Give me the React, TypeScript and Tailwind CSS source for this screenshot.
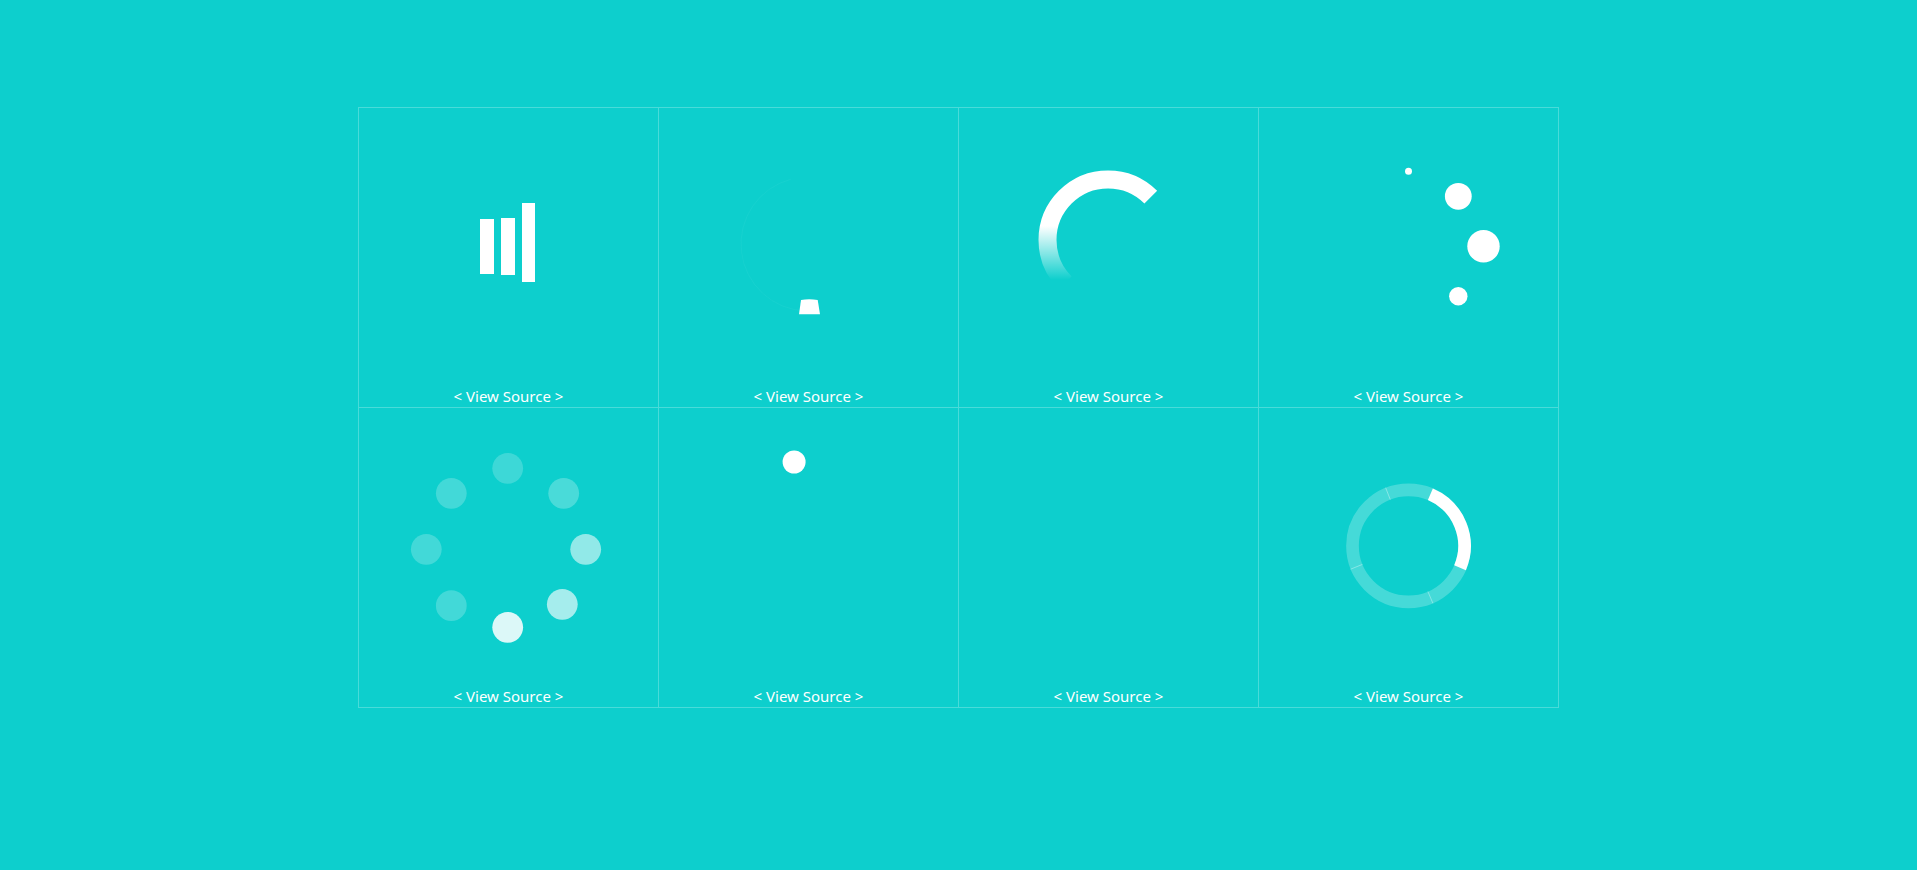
import React from "react"

// helpers for polar points around a center
const pt = (cx: number, cy: number, r: number, deg: number) => {
  const a = (deg * Math.PI) / 180
  return [cx + r * Math.cos(a), cy + r * Math.sin(a)]
}

const arc = (cx: number, cy: number, r: number, from: number, to: number, sweep: 0 | 1) => {
  const [x1, y1] = pt(cx, cy, r, from)
  const [x2, y2] = pt(cx, cy, r, to)
  return `M${x1} ${y1} A${r} ${r} 0 0 ${sweep} ${x2} ${y2}`
}

function Bars() {
  return (
    <g fill="#fff">
      <rect x="122" y="112" width="14" height="55" />
      <rect x="143" y="111" width="14" height="57" />
      <rect x="164" y="96" width="13" height="79" />
    </g>
  )
}

function Drop() {
  return (
    <g>
      <path d={arc(150, 137, 67, 92, 255, 1)} fill="none" stroke="#fff" strokeOpacity="0.04" strokeWidth="1" />
      <path d="M143 193 Q151 191.5 159.7 193 L162 207.3 L141 207.3 Z" fill="#fff" />
    </g>
  )
}

function Spinner() {
  return (
    <g>
      <defs>
        <linearGradient id="fade" gradientUnits="userSpaceOnUse" x1="0" y1="119" x2="0" y2="173">
          <stop offset="0" stopColor="#fff" stopOpacity="1" />
          <stop offset="1" stopColor="#fff" stopOpacity="0" />
        </linearGradient>
      </defs>
      <path d={arc(150, 133, 60.5, -45, -225, 0)} fill="none" stroke="url(#fade)" strokeWidth="18" />
    </g>
  )
}

function Orbit() {
  return (
    <g fill="#fff">
      <circle cx="150.5" cy="64.3" r="3.5" />
      <circle cx="200.3" cy="89.3" r="13.4" />
      <circle cx="225.5" cy="139.3" r="16.2" />
      <circle cx="200.3" cy="189.3" r="9.2" />
    </g>
  )
}

const ringDots = [
  { x: 149.7, y: 61.3, o: 0.2 },
  { x: 205.7, y: 86.3, o: 0.25 },
  { x: 227.7, y: 142.3, o: 0.55 },
  { x: 204.3, y: 197.3, o: 0.63 },
  { x: 149.7, y: 220.3, o: 0.86 },
  { x: 93.3, y: 198.7, o: 0.22 },
  { x: 68.3, y: 142.3, o: 0.22 },
  { x: 93.3, y: 86.3, o: 0.22 },
]

function DotCircle() {
  return (
    <g>
      {ringDots.map((d, i) => (
        <circle key={i} cx={d.x} cy={d.y} r="15.4" fill="#fff" fillOpacity={d.o} />
      ))}
    </g>
  )
}

function Bounce() {
  return <circle cx="136.1" cy="55" r="11.5" fill="#fff" />
}

function Ring() {
  const cx = 150.5
  const cy = 138.8
  return (
    <g>
      <circle cx={cx} cy={cy} r="56" fill="none" stroke="#fff" strokeOpacity="0.23" strokeWidth="12.7" />
      <path d={arc(cx, cy, 56, -67, 23, 1)} fill="none" stroke="#fff" strokeWidth="12.7" />
      {[-111.5, 158, 67].map((a) => {
        const [x1, y1] = pt(cx, cy, 49.6, a)
        const [x2, y2] = pt(cx, cy, 62.4, a)
        return <line key={a} x1={x1} y1={y1} x2={x2} y2={y2} stroke="#fff" strokeOpacity="0.35" strokeWidth="1" />
      })}
    </g>
  )
}

const loaders = [Bars, Drop, Spinner, Orbit, DotCircle, Bounce, null, Ring]

export default function App() {
  return (
    <div className="min-h-screen w-full bg-[#0dcfcd] pt-[107px] font-['Noto_Sans',sans-serif]">
      <div className="mx-auto grid w-[1201px] grid-cols-4 border-l border-t border-white/25">
        {loaders.map((Loader, i) => (
          <div key={i} className="flex h-[300px] flex-col border-b border-r border-white/25">
            <svg width="299" height="278" viewBox="1 1 299 278" className="block">
              {Loader && <Loader />}
            </svg>
            <a href="#" className="block pb-px text-center text-[15px] leading-5 text-white">
              &lt; View Source &gt;
            </a>
          </div>
        ))}
      </div>
    </div>
  )
}
